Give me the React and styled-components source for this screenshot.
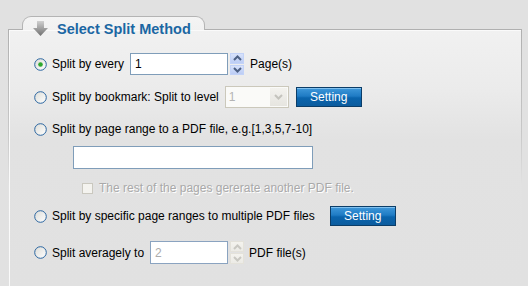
import React from "react";
import styled, { createGlobalStyle } from "styled-components";

const GlobalStyle = createGlobalStyle`
  html, body {
    margin: 0;
    padding: 0;
    background: #e1e1e1;
  }
  body {
    font-family: "Liberation Sans", Arial, sans-serif;
    font-size: 12px;
    color: #000;
  }
`;

const Page = styled.div`
  width: 528px;
  height: 286px;
  padding: 16px 0 0 8px;
  box-sizing: border-box;
  overflow: hidden;
`;

const Tab = styled.div`
  position: relative;
  z-index: 1;
  margin-left: 14px;
  margin-bottom: -1px;
  width: 183px;
  height: 14px;
  box-sizing: border-box;
  border: 1px solid #b4b4b4;
  border-bottom: none;
  border-radius: 9px 9px 0 0;
  background: linear-gradient(#f4f4f4, #f1f1f1);
  display: flex;
  align-items: flex-start;
  padding: 2px 0 0 10px;
  gap: 9px;
`;

const TabTitle = styled.span`
  font-family: "Liberation Sans", Arial, sans-serif;
  font-weight: bold;
  font-size: 14.5px;
  line-height: 17px;
  margin-top: 2px;
  color: #1b67a3;
  white-space: nowrap;
`;

const Panel = styled.div`
  width: 514px;
  height: 260px;
  box-sizing: border-box;
  border: 1px solid transparent;
  border-bottom: none;
  border-image: linear-gradient(#b0b0b0, #c8c8c8 40%, rgba(225, 225, 225, 0) 60%) 1;
  background: linear-gradient(#f1f1f1 0, #ebebeb 60px, #e2e2e2 110px, #e1e1e1);
  box-shadow: inset 1px 1px 0 #fafafa;
  padding: 23px 0 0 25px;
  display: flex;
  flex-direction: column;
`;

const Row = styled.div`
  display: flex;
  align-items: center;
  height: ${(p) => p.$h || 22}px;
  margin-top: ${(p) => p.$mt || 0}px;
  margin-left: ${(p) => p.$ml || 0}px;
  white-space: nowrap;
`;

const Label = styled.span`
  margin-left: ${(p) => p.$ml || 0}px;
  margin-right: ${(p) => p.$mr || 0}px;
  color: ${(p) => (p.$disabled ? "#a9a9a9" : "#000")};
  text-shadow: ${(p) => (p.$disabled ? "1px 1px 0 #ffffff" : "none")};
`;

const TextBox = styled.div`
  width: ${(p) => p.$w}px;
  height: ${(p) => p.$h || 22}px;
  box-sizing: border-box;
  border: 1px solid ${(p) => (p.$disabled ? "#8aa3c0" : "#7f9db9")};
  background: #fff;
  padding-left: 4px;
  display: flex;
  align-items: center;
  color: ${(p) => (p.$disabled ? "#acacac" : "#000")};
  font-size: 12px;
`;

const SpinBox = styled.div`
  margin-left: 2px;
  width: 14px;
  height: ${(p) => p.$h || 22}px;
  display: flex;
  flex-direction: column;
  gap: 1px;
`;

const SpinHalf = styled.div`
  flex: 1;
  display: flex;
  align-items: center;
  justify-content: center;
  background: ${(p) =>
    p.$disabled
      ? "linear-gradient(#f4f3ee, #ecebe6)"
      : "linear-gradient(#d7e2fb, #bccdf5)"};
  border: 1px solid ${(p) => (p.$disabled ? "#e4e2da" : "#c3d3f8")};
  box-sizing: border-box;
`;

const SelectBox = styled.div`
  width: 64px;
  height: 22px;
  box-sizing: border-box;
  border: 1px solid #cbc8bb;
  background: #fafaf8;
  display: flex;
  align-items: stretch;
  color: #b4b4b4;
`;

const SelectValue = styled.span`
  flex: 1;
  padding-left: 3px;
  display: flex;
  align-items: center;
`;

const SelectArrow = styled.div`
  width: 17px;
  margin: 1px;
  background: linear-gradient(#f3f2ee, #e6e5e0);
  display: flex;
  align-items: center;
  justify-content: center;
`;

const SettingButton = styled.button`
  width: 66px;
  height: 20px;
  margin-left: ${(p) => p.$ml || 0}px;
  padding: 0;
  border: 1px solid #0b3d68;
  background: linear-gradient(#3f98da 0, #1f7bc4 45%, #0a64ad 55%, #0c5c9e 100%);
  box-shadow: inset 0 1px 0 #7fc0ef;
  color: #fff;
  font-family: "Liberation Sans", Arial, sans-serif;
  font-size: 12px;
  cursor: pointer;
`;

const CheckBox = styled.div`
  width: 11px;
  height: 11px;
  box-sizing: border-box;
  border: 1px solid #cac8bf;
  background: #f4f3ef;
`;

function Radio({ checked }) {
  return (
    <svg width="13" height="13" viewBox="0 0 13 13">
      <defs>
        <linearGradient id="rg" x1="0" y1="0" x2="1" y2="1">
          <stop offset="0" stopColor="#dcdcd7" />
          <stop offset="1" stopColor="#ffffff" />
        </linearGradient>
      </defs>
      <circle cx="6.5" cy="6.5" r="5.8" fill="url(#rg)" stroke="#2a65a0" strokeWidth="1" />
      {checked && <circle cx="6.5" cy="6.5" r="2.3" fill="#2ea82e" />}
    </svg>
  );
}

function Chevron({ up, color }) {
  return (
    <svg width="9" height="6" viewBox="0 0 9 6">
      <path
        d={up ? "M1 5 L4.5 1.5 L8 5" : "M1 1 L4.5 4.5 L8 1"}
        fill="none"
        stroke={color}
        strokeWidth="2"
      />
    </svg>
  );
}

function Spinner({ disabled, h }) {
  const color = disabled ? "#c9c8c2" : "#4d6185";
  return (
    <SpinBox $h={h}>
      <SpinHalf $disabled={disabled}>
        <Chevron up color={color} />
      </SpinHalf>
      <SpinHalf $disabled={disabled}>
        <Chevron color={color} />
      </SpinHalf>
    </SpinBox>
  );
}

function DownArrow() {
  return (
    <svg width="15" height="15" viewBox="0 0 15 15" style={{ marginTop: 2 }}>
      <defs>
        <linearGradient id="da" x1="0" y1="0" x2="0" y2="1">
          <stop offset="0" stopColor="#d0d0d0" />
          <stop offset="1" stopColor="#707070" />
        </linearGradient>
      </defs>
      <path d="M4 0 H11 V7 H15 L7.5 15 L0 7 H4 Z" fill="url(#da)" />
    </svg>
  );
}

export default function App() {
  return (
    <Page>
      <GlobalStyle />
      <Tab>
        <DownArrow />
        <TabTitle>Select Split Method</TabTitle>
      </Tab>
      <Panel>
        <Row>
          <Radio checked />
          <Label $ml={5} $mr={6}>Split by every</Label>
          <TextBox $w={98}>1</TextBox>
          <Spinner />
          <Label $ml={6}>Page(s)</Label>
        </Row>
        <Row $mt={11}>
          <Radio />
          <Label $ml={5} $mr={6}>Split by bookmark: Split to level</Label>
          <SelectBox>
            <SelectValue>1</SelectValue>
            <SelectArrow>
              <Chevron color="#c4c3bd" />
            </SelectArrow>
          </SelectBox>
          <SettingButton $ml={7}>Setting</SettingButton>
        </Row>
        <Row $mt={10}>
          <Radio />
          <Label $ml={5}>Split by page range to a PDF file, e.g.[1,3,5,7-10]</Label>
        </Row>
        <Row $mt={6} $ml={39} $h={23}>
          <TextBox $w={240} $h={23} />
        </Row>
        <Row $mt={10} $ml={48} $h={18}>
          <CheckBox />
          <Label $ml={6} $disabled>The rest of the pages gererate another PDF file.</Label>
        </Row>
        <Row $mt={8}>
          <Radio />
          <Label $ml={5}>Split by specific page ranges to multiple PDF files</Label>
          <SettingButton $ml={15}>Setting</SettingButton>
        </Row>
        <Row $mt={14} $h={23}>
          <Radio />
          <Label $ml={5} $mr={6}>Split averagely to</Label>
          <TextBox $w={78} $h={23} $disabled>2</TextBox>
          <Spinner disabled h={23} />
          <Label $ml={5}>PDF file(s)</Label>
        </Row>
      </Panel>
    </Page>
  );
}
